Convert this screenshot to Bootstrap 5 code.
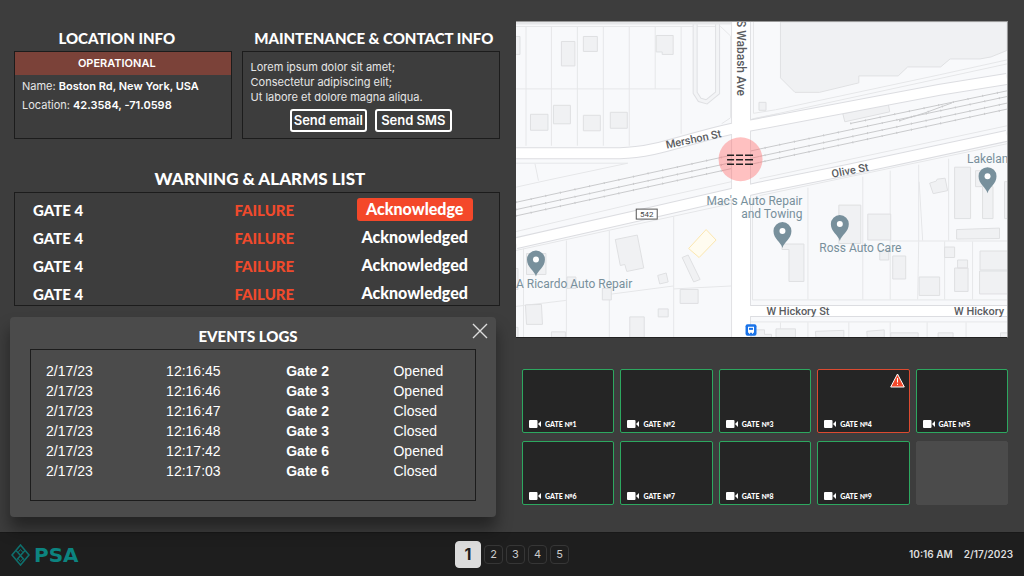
<!DOCTYPE html>
<html lang="en">
<head>
<meta charset="utf-8">
<meta name="viewport" content="width=device-width, initial-scale=1">
<title>PSA Gate Monitoring</title>
<link href="https://cdn.jsdelivr.net/npm/bootstrap@5.3.0/dist/css/bootstrap.min.css" rel="stylesheet">
<style>
  body { background: #3d3d3d; color: #fff; font-family: Inter, sans-serif; font-size: 11px; line-height: 15px; }
  .heading, .alarms, .gate-name { font-family: Lato, sans-serif; font-weight: 900; }
  .heading { font-size: 15px; line-height: 18px; margin: 0; text-align: center; }
  .side { padding: 29px 12px 14px 10px; }
  .site { padding: 21px 16px 14px 4px; }
  .frame { border: 1px solid #1c1c1c; }
  .info-row { display: grid; grid-template-columns: 218fr 259fr; gap: 10px; padding: 0 0 0 4px; }
  .info-row .frame { height: 88px; margin-top: 4px; }
  .info-row .heading { padding-right: 12px; }
  .info-row .wide-heading { padding: 0 0 0 6px; }
  .state { background: #7b4239; line-height: 23px; padding-right: 12px; }
  .info-text { padding: 4px 7px 0; }
  .soft { color: #e6e6e6; }
  .btn-send { --bs-btn-color: #fff; --bs-btn-border-color: #fff; --bs-btn-hover-bg: #fff; --bs-btn-hover-color: #222;
    --bs-btn-padding-x: 2px; --bs-btn-padding-y: 0; --bs-btn-font-size: 13px; --bs-btn-border-width: 2px; --bs-btn-border-radius: 3px;
    --bs-btn-font-weight: 600; line-height: 19px; min-width: 77px; }
  .alarm-head { margin-top: 31px; font-size: 17px; padding-left: 10px; }
  .alarm-box { margin: 4px 0 0 4px; padding: 3px 0 0; height: 114px; }
  .alarms { width: 100%; font-size: 15px; line-height: 20px; table-layout: fixed; }
  .alarms td { height: 28px; padding: 0 0 0 18px; }
  .alarms .fail { color: #f04a2c; padding-left: 21px; }
  .alarms .ack { padding: 0 4px 2px 0; text-align: center; font-size: 16px; }
  .btn-ack { background: #f4482a; color: #fff; border: 0; border-radius: 3px; width: 116px; height: 23px; line-height: 20px; font-weight: 900; display: block; margin: 0 auto; }
  .log-panel { background: #4b4b4b; border-radius: 4px; margin: 11px 4px 0 0; padding: 10px 20px 16px; height: 200px; position: relative; z-index: 2;
    box-shadow: 0 12px 16px rgba(0,0,0,.42); }
  .log-panel .heading { padding-right: 10px; }
  .log-panel .frame { height: 152px; margin-top: 4px; padding: 11px 0 0 15px; }
  .log-close { position: absolute; top: 6px; right: 8px; width: 16px; height: 16px; padding: 0; border: 0; background: none; line-height: 0; }
  .logs { font: 14px/20px "Liberation Sans", sans-serif; width: 100%; table-layout: fixed; }
  .logs td { padding: 0; }
  .map-view { display: block; width: 100%; background: #f8f9fb; border-bottom: 1px solid #222; border-top: 1px solid #999; border-right: 1px solid #999; }
  .map-view text { font-family: Roboto, sans-serif; }
  .cams { display: grid; grid-template-columns: repeat(5, 1fr); gap: 8px 6px; margin: 31px 0 0 6px; }
  .cam { background: #252525; border: 1px solid #2da860; border-radius: 2px; height: 64px; padding: 0 0 4px 6px; position: relative; }
  .cam.alert-on { border-color: #dd4a30; }
  .cam.vacant { background: #4b4b4b; border-color: #4b4b4b; }
  .gate-name { font-size: 7px; line-height: 8px; }
  .cam-warn { position: absolute; top: 3px; right: 4px; }
  .status-bar { background: #1e1e1e; height: 44px; padding: 0 11px; border-top: 1px solid #191919; display: grid; grid-template-columns: 1fr auto 1fr; font-weight: 600; font-size: 10px; color: #ddd; }
  .brand { color: #0c8480; text-decoration: none; font: bold 20px/22px "DejaVu Sans", sans-serif; }
  .pager { gap: 3px; }
  .clock { gap: 11px; }
  .pg { width: 19px; height: 19px; padding: 0; border: 1px solid #363636; border-radius: 4px; background: none; color: #ccc; font-size: 11px; line-height: 15px; }
  .pg.now { width: 26px; height: 27px; background: #dcdcdc; border-color: #dcdcdc; color: #1e1e1e; font-size: 16px; font-weight: 700; }
</style>
</head>
<body class="d-flex flex-column min-vh-100">
<main class="row g-0 flex-grow-1">
  <section class="col-6 side">
    <div class="info-row">
      <div>
        <h2 class="heading">LOCATION INFO</h2>
        <div class="frame">
          <div class="state text-center fw-semibold">OPERATIONAL</div>
          <div class="info-text soft">Name: <b class="text-white fw-semibold">Boston Rd, New York, USA</b></div>
          <div class="info-text soft">Location: <b class="text-white fw-semibold">42.3584, -71.0598</b></div>
        </div>
      </div>
      <div>
        <h2 class="heading wide-heading text-nowrap">MAINTENANCE &amp; CONTACT INFO</h2>
        <div class="frame px-2 pt-1">
          <p class="soft mb-0 pt-1">Lorem ipsum dolor sit amet;<br>Consectetur adipiscing elit;<br>Ut labore et dolore magna aliqua.</p>
          <div class="d-flex gap-2 justify-content-center pt-1">
            <button type="button" class="btn btn-send">Send email</button>
            <button type="button" class="btn btn-send">Send SMS</button>
          </div>
        </div>
      </div>
    </div>

    <h2 class="heading alarm-head">WARNING &amp; ALARMS LIST</h2>
    <div class="frame alarm-box">
      <table class="alarms">
        <colgroup><col style="width:41%"><col style="width:25%"><col></colgroup>
        <tbody>
          <tr><td>GATE 4</td><td class="fail">FAILURE</td><td class="ack"><button type="button" class="btn-ack">Acknowledge</button></td></tr>
          <tr><td>GATE 4</td><td class="fail">FAILURE</td><td class="ack">Acknowledged</td></tr>
          <tr><td>GATE 4</td><td class="fail">FAILURE</td><td class="ack">Acknowledged</td></tr>
          <tr><td>GATE 4</td><td class="fail">FAILURE</td><td class="ack">Acknowledged</td></tr>
        </tbody>
      </table>
    </div>

    <section class="log-panel">
      <button type="button" class="log-close" aria-label="Close events logs">
        <svg width="16" height="16" viewBox="0 0 16 16" stroke="#ddd" stroke-width="1.4"><path d="M1 1l14 14M15 1L1 15"/></svg>
      </button>
      <h2 class="heading">EVENTS LOGS</h2>
      <div class="frame">
        <table class="logs">
          <colgroup><col style="width:28%"><col style="width:28%"><col style="width:25%"><col></colgroup>
          <tbody>
            <tr><td>2/17/23</td><td>12:16:45</td><td><b>Gate 2</b></td><td>Opened</td></tr>
            <tr><td>2/17/23</td><td>12:16:46</td><td><b>Gate 3</b></td><td>Opened</td></tr>
            <tr><td>2/17/23</td><td>12:16:47</td><td><b>Gate 2</b></td><td>Closed</td></tr>
            <tr><td>2/17/23</td><td>12:16:48</td><td><b>Gate 3</b></td><td>Closed</td></tr>
            <tr><td>2/17/23</td><td>12:17:42</td><td><b>Gate 6</b></td><td>Opened</td></tr>
            <tr><td>2/17/23</td><td>12:17:03</td><td><b>Gate 6</b></td><td>Closed</td></tr>
          </tbody>
        </table>
      </div>
    </section>
  </section>

  <section class="col-6 site">
    <svg class="map-view" viewBox="0 0 492 316" role="img" aria-label="Map around the Wabash Ave crossing">
      <defs>
        <g id="pin"><path d="M0 17C-1.500 11-9 8-9 0A9 9 0 0 1 9 0C9 8 1.500 11 0 17Z" fill="#78909c"/><circle r="3" fill="#fff"/></g>
        <g id="cross"><path d="M0 131.500H104C140 131 170 117 216 107L244 102L424 68L492 57M0 221.700L131 192L244 166L334 148L492 114M234 289.500H492"/></g>
      </defs>
      <!-- large lot -->
      <path d="M265 0V56L279.500 70.500H304L343.500 61V54H383L392.500 45H425.500L435 37H465L476 35L492 28.500V0Z" fill="#f0f1f3" stroke="#e0e1e3"/>
      <!-- parcel lines -->
      <g fill="none" stroke="#e6e7e9">
        <path d="M0 4.500H205L215 14V96L206 102M0 67H165M10 4V124M35.500 4V124M61.500 4V124M87.500 4V124M113.500 4V124M139.500 4V67M165.500 4V112"/>
        <path d="M0 141.500H112L34 158L0 165.500M19 142L22.500 159M238 0V91.500L260 88L424 53L492 38M237 97L262 92M234 98L492 42"/>
        <path d="M0 210L131 179L216 160M244 157L492 104M0 229L216 182M244 174L492 122"/>
        <path d="M7.500 227V316M50.500 219V316M93.500 209V316M158 195V316M0 285L50 279M93 273L158 264.500M158 267.500L216 264.500"/>
        <path d="M237 178V278.500H492M292.500 166V278M347.500 155V278M375 149V278M403.500 143V220L402.500 278M404 160L407.500 219M433.500 137V219M375 219.500H492M429.500 220V278M457.500 220V278"/>
        <path d="M235 300.500H492M265 301V316M292.500 301V316M333.500 301V316M375 301V316M412 301V316M451 301V316"/>
      </g>
      <!-- buildings -->
      <g fill="#f0f1f3" stroke="#dfe0e2">
        <path d="M-1 14.500H4V32.500H-1ZM45.500 19.500H59V44H45.500ZM67.500 14.500H81.500V29.500H67.500ZM140.500 13.500H157.500V32.500H146.500V30H140.500ZM14.500 92.500H32V108.500H14.500ZM37.500 83.500H54.500V102H37.500ZM67.500 93.500H84.500V109H67.500ZM94.500 90.500H111.500V106.500H94.500ZM243.500 80.500H250.500V88.500H243.500Z"/>
        <path d="M327.500 92L373 82L374.500 90L329.500 100Z"/>
        <path d="M99.500 218L121.500 213.500L128 246.500L111 250L109 243L104.500 244ZM142 254L150.500 251.500L152.500 260.500L144 262.500ZM166.500 236L172.500 233.500L184.500 258L178 260.500ZM164.500 268H182.500V282H164.500ZM142.500 287.500H152.500V295.500H142.500ZM114 295.500H128.500V316H114ZM10.500 232H30V253H10.500ZM51 255.500H60V267H51ZM86.500 267H95.500V278.500H86.500ZM9.500 283.500L25.500 283L26.500 303H10.500ZM-1 247H2V268H-1ZM35.500 310.500H49.500V316H35.500ZM-1 306H2V316H-1Z"/>
        <path d="M266.500 222.500H288.500V260H273.500V228H266.500ZM323.500 183.500H345.500V222H323.500ZM352.500 192.500H375.500V218.500H352.500ZM364.500 229H373.500V238.500H364.500ZM377.500 234.500H390.500V257.500H377.500ZM414.500 161.500L421 159.500L422 157.500L430 156.500L432.500 169L418 172ZM439.500 145.500H455.500V197H439.500ZM460.500 149H475V165H478V197H467.500V165H460.500ZM489.500 160H493V197H489.500ZM441.500 208L484.500 206.500V217L441.500 217.500ZM429.500 225.500H439.500V236H429.500ZM442.500 238.500H452.500V246.500H442.500ZM439.500 246.500H453V270H439.500ZM404 255.500H424.500V274H404ZM465 229.500H493V248.500H465ZM464.500 249.500H493V272.500H464.500Z"/>
        <path d="M260.500 307.500H280V316H260.500ZM300 310L328.500 309V316H300.500ZM351.500 310L369 308.500V316H352ZM375.500 311.500H403V316H375.500ZM423 311.500H438V316H423ZM485.500 311.500H493V316H485.500ZM236 308.500H249V313H256V316H236Z"/>
      </g>
      <path d="M190.500 208L200.500 218.500L183.500 236L173 227Z" fill="#fffcf0" stroke="#fbe6ae"/>
      <!-- drive loop -->
      <path d="M179.500 2V71L184 78L191 80L202 71V2" fill="none" stroke="#dfe0e3" stroke-width="5"/>
      <path d="M179.500 2V71L184 78L191 80L202 71V2" fill="none" stroke="#f3f4f6" stroke-width="3"/>
      <!-- rails -->
      <g fill="none" stroke="#c9cacc">
        <path id="rails" d="M0 180.700L244 127.300L492 74.700M0 188L244 134.700L492 81.300M0 194.300L244 140.700L492 87.300M335 101.700L492 69M384 99L410 91L437 81"/>
        <use href="#rails" stroke-width="2" stroke-dasharray="1 14"/>
      </g>
      <!-- roads -->
      <g fill="none">
        <path d="M0 1H216" stroke="#e6e7e9" stroke-width="3"/>
        <use href="#cross" stroke="#dcdde1" stroke-width="12"/>
        <path d="M225.500 0V316" stroke="#e0e1e4" stroke-width="20"/>
        <use href="#cross" stroke="#fff" stroke-width="10"/>
        <path d="M225.500 0V316" stroke="#fff" stroke-width="18"/>
      </g>
      <circle cx="225" cy="137.500" r="22" fill="#ff6464" fill-opacity=".4"/>
      <path d="M211.500 133.500h7m2 0h7m2 0h8M211.500 138h7m2 0h7m2 0h8M211.500 142.500h7m2 0h7m2 0h8" stroke="#222" stroke-width="1.600"/>
      <g font-size="11" font-weight="500" fill="#5a5c5f">
        <text font-size="12" transform="translate(221 -2) rotate(90)">S Wabash Ave</text>
        <text transform="translate(151 127) rotate(-12)">Mershon St</text>
        <text transform="translate(317 156) rotate(-11)">Olive St</text>
        <text x="251" y="294">W Hickory St</text>
        <text x="439" y="294">W Hickory St</text>
      </g>
      <rect x="120.500" y="187.500" width="21" height="10" fill="#fff" stroke="#555"/>
      <text x="131" y="195.500" font-size="8" text-anchor="middle" fill="#444">542</text>
      <g font-size="12" fill="#78909c">
        <text x="0" y="267">A Ricardo Auto Repair</text>
        <text x="287" y="183" text-anchor="end">Mac's Auto Repair</text>
        <text x="287" y="196" text-anchor="end">and Towing</text>
        <text x="304" y="230">Ross Auto Care</text>
        <text x="452" y="141">Lakeland</text>
      </g>
      <use href="#pin" x="20" y="238"/>
      <use href="#pin" x="267" y="209.500"/>
      <use href="#pin" x="324.500" y="202.500"/>
      <use href="#pin" x="472.500" y="154.500"/>
      <rect x="230" y="303" width="11" height="11.500" rx="2" fill="#1a73e8"/>
      <path d="M232.500 305.500h6v6h-1v1h-1v-1h-2v1h-1v-1h-1z" fill="#fff"/>
      <path d="M233.500 306.500h4v2h-4z" fill="#1a73e8"/>
    </svg>

    <svg width="0" height="0" class="position-absolute" aria-hidden="true">
      <symbol id="camera" viewBox="0 0 12 8"><rect width="8.500" height="8" rx="1" fill="#fff"/><path d="M9 4l3-3v6z" fill="#fff"/></symbol>
    </svg>
    <div class="cams">
      <div class="cam d-flex align-items-end gap-1"><svg width="12" height="8"><use href="#camera"/></svg><span class="gate-name">GATE №1</span></div>
      <div class="cam d-flex align-items-end gap-1"><svg width="12" height="8"><use href="#camera"/></svg><span class="gate-name">GATE №2</span></div>
      <div class="cam d-flex align-items-end gap-1"><svg width="12" height="8"><use href="#camera"/></svg><span class="gate-name">GATE №3</span></div>
      <div class="cam alert-on d-flex align-items-end gap-1">
        <svg class="cam-warn" width="15" height="15" viewBox="0 0 15 15" role="img" aria-label="Failure"><path d="M7.500 1L14.300 14H.7Z" fill="#f4482a" stroke="#fff" stroke-linejoin="round"/><path d="M7.500 5v4.500M7.500 10.800v1.200" stroke="#fff"/></svg>
        <svg width="12" height="8"><use href="#camera"/></svg><span class="gate-name">GATE №4</span></div>
      <div class="cam d-flex align-items-end gap-1"><svg width="12" height="8"><use href="#camera"/></svg><span class="gate-name">GATE №5</span></div>
      <div class="cam d-flex align-items-end gap-1"><svg width="12" height="8"><use href="#camera"/></svg><span class="gate-name">GATE №6</span></div>
      <div class="cam d-flex align-items-end gap-1"><svg width="12" height="8"><use href="#camera"/></svg><span class="gate-name">GATE №7</span></div>
      <div class="cam d-flex align-items-end gap-1"><svg width="12" height="8"><use href="#camera"/></svg><span class="gate-name">GATE №8</span></div>
      <div class="cam d-flex align-items-end gap-1"><svg width="12" height="8"><use href="#camera"/></svg><span class="gate-name">GATE №9</span></div>
      <div class="cam vacant"></div>
    </div>
  </section>
</main>

<footer class="status-bar align-items-center">
  <a href="#" class="brand d-flex align-items-center gap-1">
    <svg width="19" height="22" viewBox="0 0 19 22" fill="none" stroke="#0f6f6d" stroke-width="1.600"><path d="M9.500 1L18 11L9.500 21L1 11Z"/><path d="M5 6.500L13 15.500M14 6.500L6 15.500" stroke-width="1.400"/><path d="M9.500 5.500l2.500 3l-2.500 3l-2.500-3zM9.500 11.500l2.500 3l-2.500 3l-2.500-3z" stroke-width="1"/></svg>
    PSA
  </a>
  <nav class="pager d-flex align-items-center" aria-label="Sites">
    <button type="button" class="pg now" aria-current="page">1</button>
    <button type="button" class="pg">2</button>
    <button type="button" class="pg">3</button>
    <button type="button" class="pg">4</button>
    <button type="button" class="pg">5</button>
  </nav>
  <div class="clock d-flex justify-content-end"><span>10:16 AM</span><span>2/17/2023</span></div>
</footer>
<script src="https://cdn.jsdelivr.net/npm/bootstrap@5.3.0/dist/js/bootstrap.bundle.min.js"></script>
</body>
</html>
